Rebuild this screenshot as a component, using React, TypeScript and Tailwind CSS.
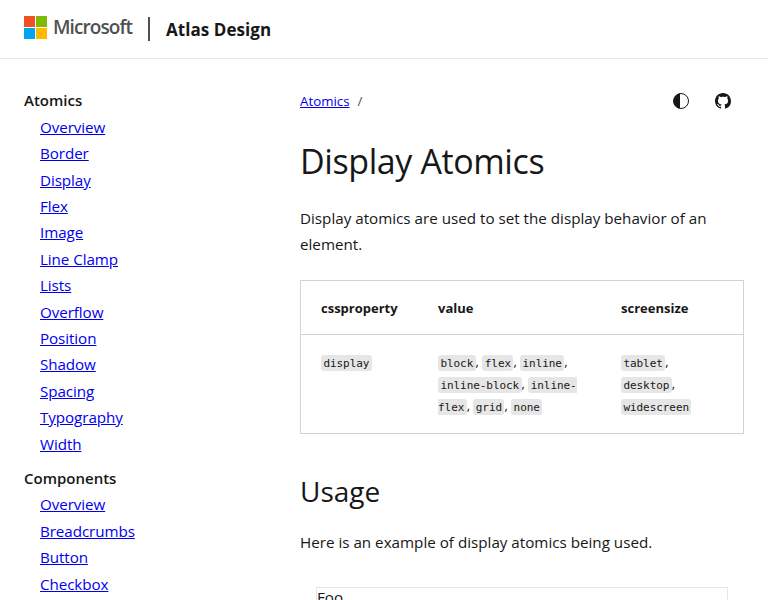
import type { ReactNode } from 'react';

const atomics = [
  'Overview', 'Border', 'Display', 'Flex', 'Image', 'Line Clamp', 'Lists',
  'Overflow', 'Position', 'Shadow', 'Spacing', 'Typography', 'Width',
];
const components = ['Overview', 'Breadcrumbs', 'Button', 'Checkbox'];

function Code({ children }: { children: ReactNode }) {
  return (
    <code className="rounded-[3px] bg-[#e6e6e6] px-[2.4px] py-[1.5px] font-['DejaVu_Sans_Mono',monospace] text-[11px] leading-none tracking-[-0.06px]">
      {children}
    </code>
  );
}

function NavGroup({ title, items }: { title: string; items: string[] }) {
  return (
    <li className="mb-2">
      <span className="text-[15px] font-semibold">{title}</span>
      <ul className="pl-4">
        {items.map((item) => (
          <li key={item} className="tracking-[-0.08px]">
            <a href="#" className="text-[#0000ee] underline">{item}</a>
          </li>
        ))}
      </ul>
    </li>
  );
}

export default function App() {
  return (
    <div className="h-[600px] overflow-hidden bg-white font-['Open_Sans',sans-serif] text-[15.2px] text-[#171717]">
      <header className="flex h-[59px] items-center border-b border-[#e6e6e6] px-6">
        <div className="flex items-center gap-1.5 pb-[3px]">
          <div className="grid grid-cols-2 gap-px">
            <span className="size-[11px] bg-[#f25022]" />
            <span className="size-[11px] bg-[#7fba00]" />
            <span className="size-[11px] bg-[#00a4ef]" />
            <span className="size-[11px] bg-[#ffb900]" />
          </div>
          <span className="w-[79px] pb-px text-[19px] leading-6 font-semibold tracking-[-0.92px] text-[#505050]">Microsoft</span>
        </div>
        <span className="ml-4 h-6 w-0.5 bg-[#505050]" />
        <span className="ml-4 pt-0.5 text-[17px] font-bold tracking-[0.06px]">Atlas Design</span>
      </header>

      <div className="flex">
        <nav className="w-[300px] shrink-0 pt-[28.4px] pl-6 leading-[26.4px]">
          <ul>
            <NavGroup title="Atomics" items={atomics} />
            <NavGroup title="Components" items={components} />
          </ul>
        </nav>

        <main className="w-[444px] shrink-0">
          <div className="flex h-[84px] items-center justify-between pr-[13px]">
            <div className="flex gap-2 pt-0.5 text-[13.3px]">
              <a href="#" className="text-[#0000ee] underline">Atomics</a>
              <span className="text-[#505050]">/</span>
            </div>
            <div className="flex gap-[26px]">
              <svg viewBox="0 0 16 16" className="size-4" aria-hidden="true">
                <circle cx="8" cy="8" r="7.5" fill="none" stroke="#171717" />
                <path d="M7 .5a7.6 7.6 0 0 0 0 15z" fill="#171717" />
              </svg>
              <svg viewBox="0 0 16 16" className="size-4" fill="#171717" aria-hidden="true">
                <path d="M8 0C3.58 0 0 3.58 0 8c0 3.54 2.29 6.53 5.47 7.59.4.07.55-.17.55-.38 0-.19-.01-.82-.01-1.49-2.01.37-2.53-.49-2.69-.94-.09-.23-.48-.94-.82-1.13-.28-.15-.68-.52-.01-.53.63-.01 1.08.58 1.23.82.72 1.21 1.87.87 2.33.66.07-.52.28-.87.51-1.07-1.78-.2-3.64-.89-3.64-3.95 0-.87.31-1.59.82-2.15-.08-.2-.36-1.02.08-2.12 0 0 .67-.21 2.2.82.64-.18 1.32-.27 2-.27s1.36.09 2 .27c1.53-1.04 2.2-.82 2.2-.82.44 1.1.16 1.92.08 2.12.51.56.82 1.27.82 2.15 0 3.07-1.87 3.75-3.65 3.95.29.25.54.73.54 1.48 0 1.07-.01 1.93-.01 2.2 0 .21.15.46.55.38A8.01 8.01 0 0 0 16 8c0-4.42-3.58-8-8-8z" />
              </svg>
            </div>
          </div>

          <h1 className="mt-[-5px] text-[34px] leading-[46px] tracking-[-0.4px]">Display Atomics</h1>
          <p className="mt-[21px] leading-[26px]">
            Display atomics are used to set the display behavior of an<br />element.
          </p>

          <table className="mt-[23px] h-[154px] w-full table-fixed border-separate border-spacing-0 border border-[#d2d2d2] text-left text-[13px] leading-[22px]">
            <colgroup>
              <col className="w-[117px]" />
              <col className="w-[183px]" />
              <col />
            </colgroup>
            <thead>
              <tr className="h-[54px] font-bold">
                <th className="border-b border-[#d2d2d2] pl-5">cssproperty</th>
                <th className="border-b border-[#d2d2d2] pl-5">value</th>
                <th className="border-b border-[#d2d2d2] pl-5">screensize</th>
              </tr>
            </thead>
            <tbody>
              <tr className="align-top">
                <td className="pt-[15px] pl-5"><Code>display</Code></td>
                <td className="px-5 pt-[15px]">
                  <Code>block</Code>, <Code>flex</Code>, <Code>inline</Code>, <Code>inline-block</Code>, <Code>inline-flex</Code>, <Code>grid</Code>, <Code>none</Code>
                </td>
                <td className="pt-[15px] pr-10 pl-5"><Code>tablet</Code>, <Code>desktop</Code>, <Code>widescreen</Code></td>
              </tr>
            </tbody>
          </table>

          <h2 className="mt-[37px] text-[28px] leading-10">Usage</h2>
          <p className="mt-[18px] leading-[26px]">Here is an example of display atomics being used.</p>
          <div className="mx-4 mt-8 border border-[#e6e6e6] leading-[18px]">Foo</div>
        </main>
      </div>
    </div>
  );
}
